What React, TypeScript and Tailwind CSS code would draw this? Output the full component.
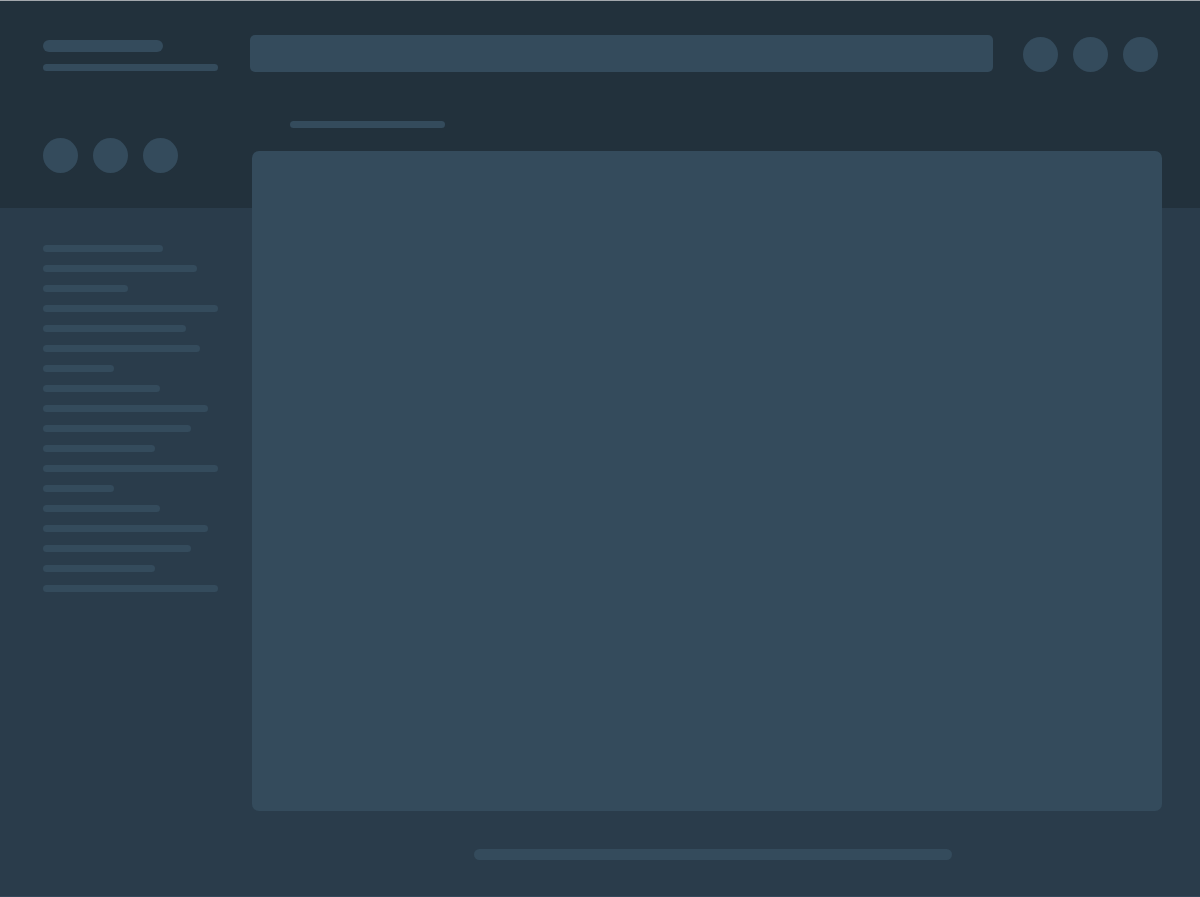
const sideLines = [120, 154, 85, 175, 143, 157, 71, 117, 165, 148, 112, 175, 71, 117, 165, 148, 112, 175]

function Bar({ className = '' }: { className?: string }) {
  return <div className={`rounded-full bg-[#344b5c] ${className}`} />
}

function Dots() {
  return (
    <div className="flex gap-[15px]">
      <div className="w-[35px] h-[35px] rounded-full bg-[#344b5c]" />
      <div className="w-[35px] h-[35px] rounded-full bg-[#344b5c]" />
      <div className="w-[35px] h-[35px] rounded-full bg-[#344b5c]" />
    </div>
  )
}

export default function App() {
  return (
    <div className="h-[897px] w-full overflow-hidden border-t border-b border-t-[#a3a8ad] border-b-[#33485a] bg-[linear-gradient(to_bottom,#22313c_0,#22313c_207px,#2a3c4b_207px)] pl-[43px] pr-[42px] font-['Inter',sans-serif]">
      {/* Top bar */}
      <div className="flex items-start pt-[34px]">
        <div className="w-[176px] flex flex-col gap-[12px] pt-[5px]">
          <Bar className="w-[120px] h-[12px]" />
          <Bar className="w-[175px] h-[7px]" />
        </div>
        <div className="ml-[31px] w-[743px] h-[37px] rounded-[5px] bg-[#344b5c]" />
        <div className="ml-auto pt-[2px]">
          <Dots />
        </div>
      </div>

      <div className="flex">
        {/* Sidebar */}
        <aside className="w-[176px] shrink-0 pt-[66px]">
          <Dots />
          <div className="mt-[72px] flex flex-col gap-[13px]">
            {sideLines.map((w, i) => (
              <div key={i} className="h-[7px] rounded-full bg-[#344b5c]" style={{ width: w }} />
            ))}
          </div>
        </aside>

        {/* Main */}
        <main className="ml-[33px] w-[910px] shrink-0 pt-[49px]">
          <Bar className="ml-[38px] w-[155px] h-[7px]" />
          <div className="mt-[23px] h-[660px] rounded-[7px] bg-[#344b5c]" />
          <Bar className="mt-[38px] ml-[222px] w-[478px] h-[11px]" />
        </main>
      </div>
    </div>
  )
}
